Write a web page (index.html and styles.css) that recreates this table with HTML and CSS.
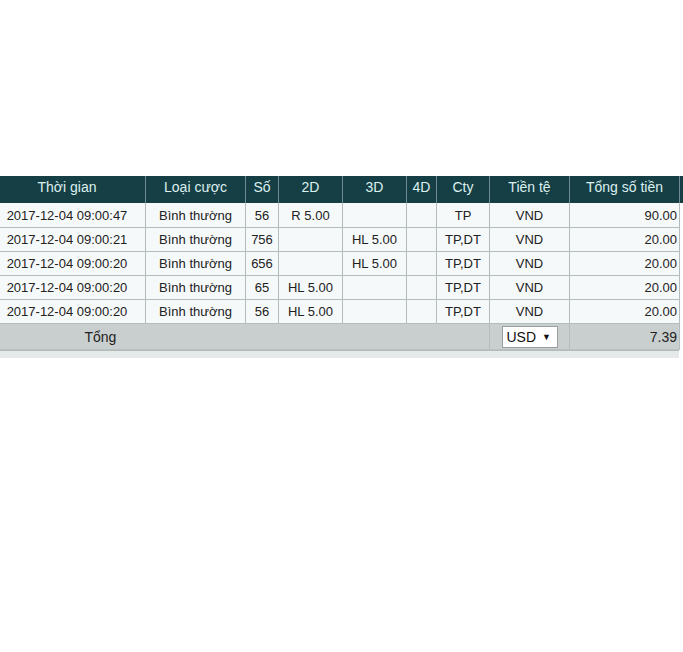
FILE: index.html
```html
<!DOCTYPE html>
<html>
<head>
<meta charset="utf-8">
<link rel="stylesheet" href="styles.css">
</head>
<body>
<div class="wrap">
  <div class="inner">
    <table class="bets">
      <colgroup>
        <col class="c-time"><col class="c-type"><col class="c-num"><col class="c-2d"><col class="c-3d"><col class="c-4d"><col class="c-cty"><col class="c-cur"><col class="c-sum"><col class="c-extra">
      </colgroup>
      <thead>
        <tr>
          <th>Thời gian</th><th>Loại cược</th><th>Số</th><th>2D</th><th>3D</th><th>4D</th><th>Cty</th><th>Tiền tệ</th><th>Tổng số tiền</th><th class="extra"></th>
        </tr>
      </thead>
      <tbody>
        <tr><td>2017-12-04 09:00:47</td><td>Bình thường</td><td>56</td><td>R 5.00</td><td></td><td></td><td>TP</td><td>VND</td><td class="num">90.00</td></tr>
        <tr><td>2017-12-04 09:00:21</td><td>Bình thường</td><td>756</td><td></td><td>HL 5.00</td><td></td><td>TP,DT</td><td>VND</td><td class="num">20.00</td></tr>
        <tr><td>2017-12-04 09:00:20</td><td>Bình thường</td><td>656</td><td></td><td>HL 5.00</td><td></td><td>TP,DT</td><td>VND</td><td class="num">20.00</td></tr>
        <tr><td>2017-12-04 09:00:20</td><td>Bình thường</td><td>65</td><td>HL 5.00</td><td></td><td></td><td>TP,DT</td><td>VND</td><td class="num">20.00</td></tr>
        <tr><td>2017-12-04 09:00:20</td><td>Bình thường</td><td>56</td><td>HL 5.00</td><td></td><td></td><td>TP,DT</td><td>VND</td><td class="num">20.00</td></tr>
      </tbody>
      <tfoot>
        <tr>
          <td colspan="7" class="total-label">Tổng</td>
          <td class="cur-cell"><span class="select">USD <span class="arrow">▼</span></span></td>
          <td class="num total">7.39</td>
        </tr>
      </tfoot>
    </table>
    <div class="band"></div>
  </div>
</div>
</body>
</html>
```
FILE: styles.css
```css
html, body {
  margin: 0;
  padding: 0;
  background: #ffffff;
}
body {
  font-family: "Liberation Sans", Arial, sans-serif;
  color: #222;
}
.wrap {
  width: 683px;
  overflow: hidden;
  padding-top: 176px;
}
.inner {
  margin-left: -12px;
  width: 720px;
}
.bets {
  border-collapse: collapse;
  table-layout: fixed;
  width: 720px;
}
.c-time { width: 157px; }
.c-type { width: 100px; }
.c-num { width: 33px; }
.c-2d { width: 64px; }
.c-3d { width: 64px; }
.c-4d { width: 30px; }
.c-cty { width: 53px; }
.c-cur { width: 80px; }
.c-sum { width: 110px; }
.c-extra { width: 29px; }

.bets th {
  background: #163f45;
  color: #dcf0f0;
  font-weight: normal;
  font-size: 14px;
  height: 27px;
  padding: 0;
  border-left: 1px solid #6f8c90;
  border-right: 1px solid #6f8c90;
  text-align: center;
  vertical-align: middle;
  line-height: 20px;
  padding-bottom: 5px;
  box-sizing: border-box;
}
.bets tbody td {
  background: #f6f9f9;
  font-size: 13px;
  height: 24px;
  padding: 1px 0 0 0;
  border: 1px solid #b4bdbd;
  text-align: center;
  vertical-align: middle;
  white-space: nowrap;
  box-sizing: border-box;
}
.bets tbody tr:first-child td {
  border-top: none;
}
.bets td.num {
  text-align: right;
  padding-right: 2px;
}
.bets tfoot td {
  background: #c9cfce;
  height: 26px;
  padding: 2px 0 0 0;
  font-size: 12px;
  border: 1px solid #b4bdbd;
  border-bottom: 1px solid #b9c0c0;
  vertical-align: middle;
  box-sizing: border-box;
}
.bets tfoot td.total-label {
  font-size: 14px;
  text-align: left;
  padding-left: 96px;
  border-left: none;
}
.cur-cell {
  text-align: center;
}
.select {
  display: inline-block;
  box-sizing: border-box;
  width: 56px;
  height: 22px;
  line-height: 20px;
  background: #fff;
  border: 1px solid #9aa0a0;
  font-size: 14px;
  color: #111;
  text-align: left;
  padding-left: 4px;
  vertical-align: middle;
}
.arrow {
  font-size: 9px;
  vertical-align: 2px;
  margin-left: 2px;
}
.bets tfoot td.total {
  font-size: 14px;
  padding-right: 2px;
  text-align: right;
}
.band {
  width: 691px;
  height: 7px;
  background: #e6e9e9;
  border-top: 1px solid #b3bbbb;
}
```
